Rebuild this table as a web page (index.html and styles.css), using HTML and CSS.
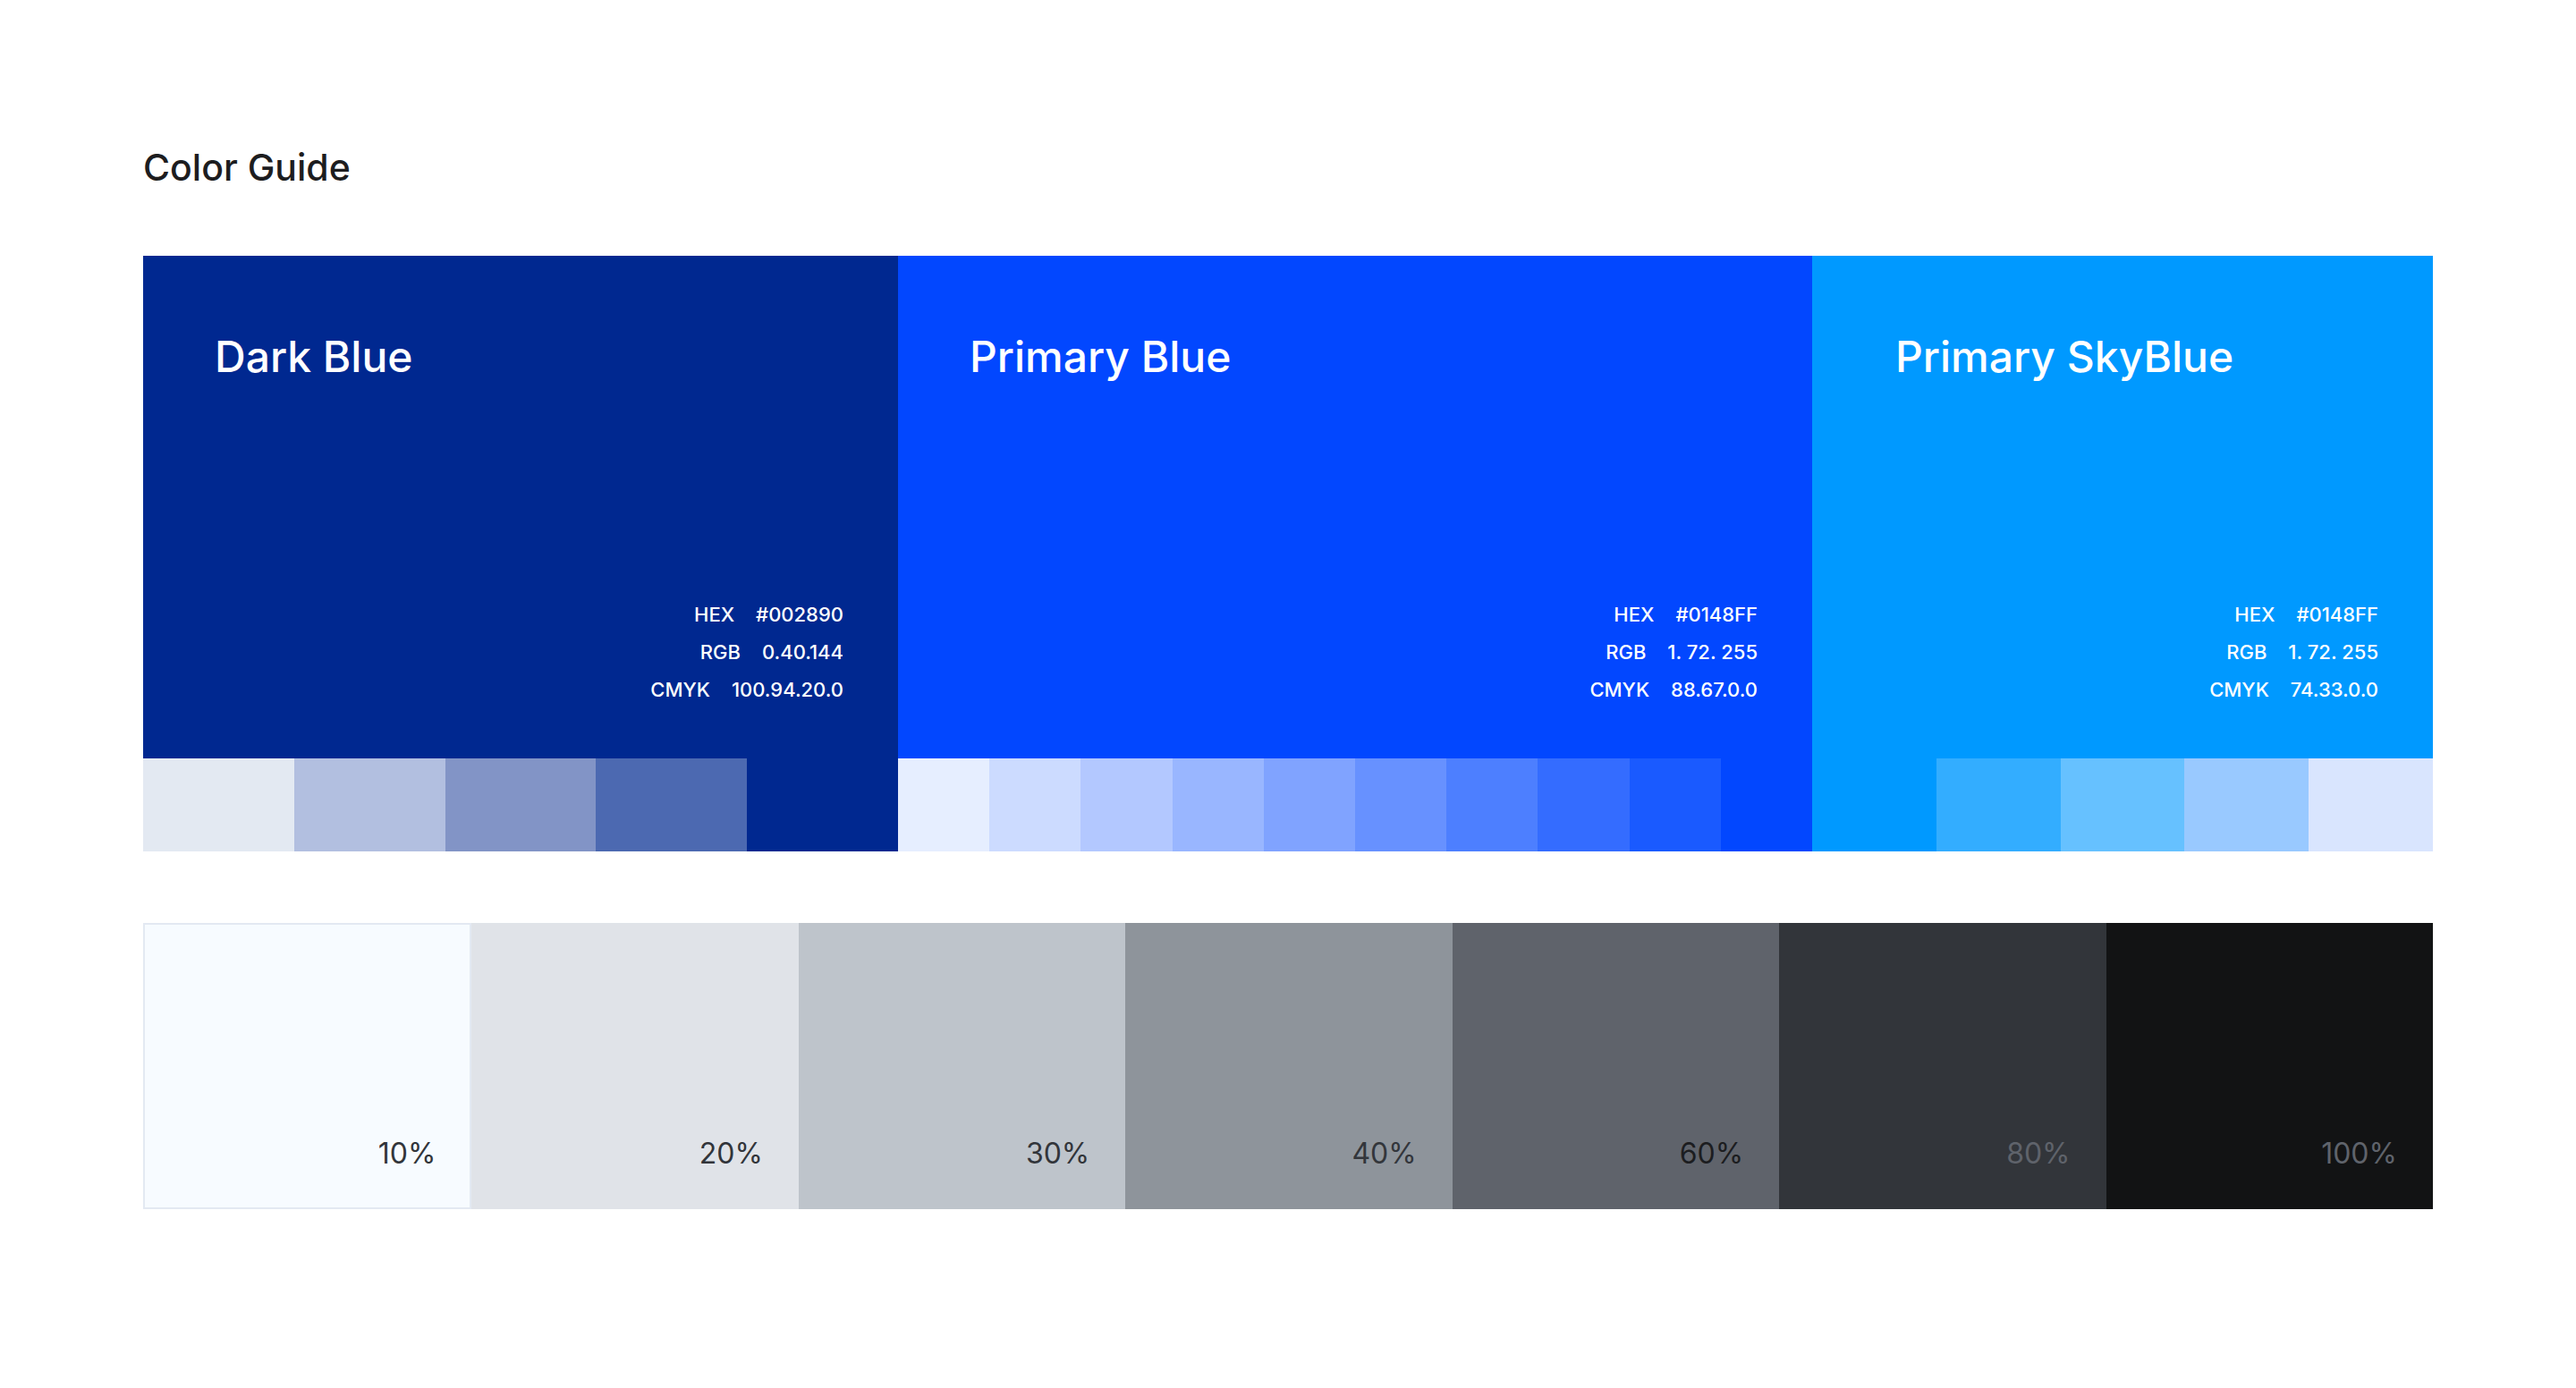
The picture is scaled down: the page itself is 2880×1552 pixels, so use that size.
FILE: index.html
```html
<!DOCTYPE html>
<html lang="en">
<head>
<meta charset="utf-8">
<title>Color Guide</title>
<link rel="stylesheet" href="styles.css">
</head>
<body>
<main class="page">
  <h1 class="title">Color Guide</h1>

  <section class="brand-row">
    <div class="brand brand-dark">
      <div class="brand-main">
        <h2 class="brand-name">Dark Blue</h2>
        <div class="specs">
          <div class="spec"><span>HEX</span><span>#002890</span></div>
          <div class="spec"><span>RGB</span><span>0.40.144</span></div>
          <div class="spec"><span>CMYK</span><span>100.94.20.0</span></div>
        </div>
      </div>
      <div class="swatches">
        <div class="sw d1"></div>
        <div class="sw d2"></div>
        <div class="sw d3"></div>
        <div class="sw d4"></div>
        <div class="sw d5"></div>
      </div>
    </div>

    <div class="brand brand-primary">
      <div class="brand-main">
        <h2 class="brand-name">Primary Blue</h2>
        <div class="specs">
          <div class="spec"><span>HEX</span><span>#0148FF</span></div>
          <div class="spec"><span>RGB</span><span>1. 72. 255</span></div>
          <div class="spec"><span>CMYK</span><span>88.67.0.0</span></div>
        </div>
      </div>
      <div class="swatches">
        <div class="sw p1"></div>
        <div class="sw p2"></div>
        <div class="sw p3"></div>
        <div class="sw p4"></div>
        <div class="sw p5"></div>
        <div class="sw p6"></div>
        <div class="sw p7"></div>
        <div class="sw p8"></div>
        <div class="sw p9"></div>
        <div class="sw p10"></div>
      </div>
    </div>

    <div class="brand brand-sky">
      <div class="brand-main">
        <h2 class="brand-name">Primary SkyBlue</h2>
        <div class="specs">
          <div class="spec"><span>HEX</span><span>#0148FF</span></div>
          <div class="spec"><span>RGB</span><span>1. 72. 255</span></div>
          <div class="spec"><span>CMYK</span><span>74.33.0.0</span></div>
        </div>
      </div>
      <div class="swatches">
        <div class="sw s1"></div>
        <div class="sw s2"></div>
        <div class="sw s3"></div>
        <div class="sw s4"></div>
        <div class="sw s5"></div>
      </div>
    </div>
  </section>

  <section class="gray-row">
    <div class="gray g10"><span>10%</span></div>
    <div class="gray g20"><span>20%</span></div>
    <div class="gray g30"><span>30%</span></div>
    <div class="gray g40"><span>40%</span></div>
    <div class="gray g60"><span>60%</span></div>
    <div class="gray g80"><span>80%</span></div>
    <div class="gray g100"><span>100%</span></div>
  </section>
</main>
</body>
</html>
```

FILE: styles.css
```css
* { box-sizing: border-box; }

html, body {
  margin: 0;
  padding: 0;
  background: #ffffff;
}

body {
  font-family: Inter, "Open Sans", "DejaVu Sans", sans-serif;
  width: 2880px;
  height: 1552px;
  overflow: hidden;
}

.page {
  padding: 163px 160px 0 160px;
}

.title {
  margin: 0 0 75px 0;
  font-size: 41px;
  line-height: 48px;
  font-weight: 500;
  color: #1d1d1f;
  letter-spacing: 0;
}

.brand-row {
  display: flex;
  height: 666px;
}

.brand {
  display: flex;
  flex-direction: column;
}

.brand-dark { width: 844px; background: #002890; }
.brand-primary { width: 1022px; background: #0247ff; }
.brand-sky { width: 694px; background: #0099ff; }

.brand-main {
  flex: 1;
  display: flex;
  flex-direction: column;
  padding: 84px 61px 56px 80px;
  color: #ffffff;
}

.brand-sky .brand-main { padding-left: 93px; }

.brand-name {
  margin: 0;
  font-size: 48px;
  line-height: 58px;
  font-weight: 500;
}

.specs {
  margin-top: auto;
  display: flex;
  flex-direction: column;
  align-items: flex-end;
}

.spec {
  display: flex;
  gap: 24px;
  font-size: 22px;
  line-height: 42px;
  font-weight: 500;
}

.swatches {
  display: flex;
  height: 104px;
}

.sw { flex: 1; }

.d1 { background: #e3e9f2; }
.d2 { background: #b2bfe0; }
.d3 { background: #8294c6; }
.d4 { background: #4c69b1; }
.d5 { background: #002890; }

.p1 { background: #e6eeff; }
.p2 { background: #ccdbff; }
.p3 { background: #b3c8ff; }
.p4 { background: #99b6ff; }
.p5 { background: #80a3ff; }
.p6 { background: #6791ff; }
.p7 { background: #4d7fff; }
.p8 { background: #346cff; }
.p9 { background: #1a5aff; }
.p10 { background: #0247ff; }

.s1 { background: #0099ff; }
.s2 { background: #33adff; }
.s3 { background: #66c1ff; }
.s4 { background: #99c9ff; }
.s5 { background: #d9e5fe; }

.gray-row {
  display: flex;
  height: 320px;
  margin-top: 80px;
}

.gray {
  flex: 1;
  display: flex;
  align-items: flex-end;
  justify-content: flex-end;
  padding: 0 40px 42px 0;
  font-size: 32px;
  line-height: 40px;
  font-weight: 400;
}

.g10 { background: #f7fbff; color: #32353a; border: 2px solid #e3e9f2; padding-right: 38px; padding-bottom: 40px; }
.g20 { background: #e0e3e8; color: #32353a; }
.g30 { background: #bec4cb; color: #32353a; }
.g40 { background: #8e949b; color: #33363b; }
.g60 { background: #5f636b; color: #1c1d20; }
.g80 { background: #32353a; color: #5f636b; }
.g100 { background: #121314; color: #5f636b; }
```
